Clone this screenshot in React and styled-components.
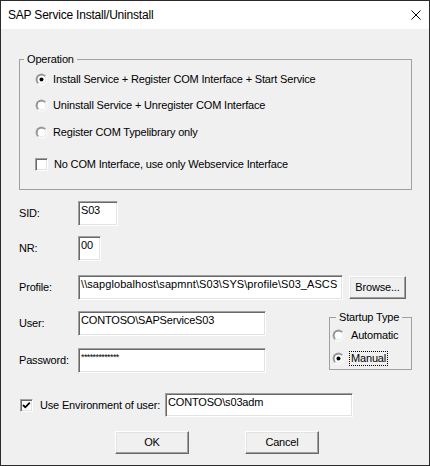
import React, { useId } from "react";
import styled, { createGlobalStyle } from "styled-components";

const Global = createGlobalStyle`
  html, body { margin: 0; padding: 0; background: #ffffff; }
  body { font-family: "Liberation Sans", Arial, sans-serif; }
  #root { width: 430px; height: 466px; }
`;

const Window = styled.div`
  width: 430px;
  height: 466px;
  box-sizing: border-box;
  border: 1px solid #2b2b2b;
  background: #f0f0f0;
  display: flex;
  flex-direction: column;
  font-family: "Liberation Sans", Arial, sans-serif;
  font-size: 11px;
  letter-spacing: -0.17px;
  line-height: 13px;
  color: #000;
`;

const TitleBar = styled.div`
  height: 28px;
  flex: none;
  background: #ffffff;
  display: flex;
  align-items: center;
  justify-content: space-between;
  padding-left: 7px;
`;

const Title = styled.span`
  font-size: 12px;
  letter-spacing: -0.2px;
  line-height: 16px;
`;

const CloseButton = styled.div`
  width: 26px;
  height: 28px;
  display: flex;
  align-items: center;
  justify-content: center;
`;

const Body = styled.div`
  flex: 1;
  display: flex;
  flex-direction: column;
  padding: 24px 17px 0 18px;
`;

const GroupBox = styled.fieldset`
  margin: 0;
  margin-left: ${(p) => (p.$pushRight ? "auto" : "0")};
  padding: 0;
  border: 1px solid #a0a0a0;
  min-width: 0;
  box-sizing: border-box;
  width: ${(p) => (p.$width ? `${p.$width}px` : "auto")};
  flex: none;
`;

const Legend = styled.legend`
  margin-left: ${(p) => p.$offset}px;
  padding: 0 3px;
  line-height: 13px;
  height: 13px;
`;

const GroupInner = styled.div`
  display: flex;
  flex-direction: column;
  padding: 0 0 ${(p) => p.$padBottom}px ${(p) => p.$padLeft}px;
`;

const Option = styled.div`
  display: flex;
  align-items: center;
  height: ${(p) => p.$h}px;
  margin-top: ${(p) => p.$mt || 0}px;
  gap: ${(p) => p.$gap}px;
  white-space: nowrap;
`;

const FocusText = styled.span`
  outline: 1px dotted #000;
  outline-offset: 0;
  padding: 0 1px;
  margin-left: -1px;
`;

const RadioSvg = styled.svg`
  flex: none;
  display: block;
`;

function Radio({ checked }) {
  const id = useId().replace(/:/g, "");
  return (
    <RadioSvg width="13" height="13" viewBox="0 0 13 13">
      <defs>
        <linearGradient id={`o${id}`} x1="0" y1="0" x2="1" y2="1">
          <stop offset="0" stopColor="#a0a0a0" />
          <stop offset="0.5" stopColor="#b4b4b4" />
          <stop offset="0.55" stopColor="#ffffff" />
          <stop offset="1" stopColor="#ffffff" />
        </linearGradient>
        <linearGradient id={`i${id}`} x1="0" y1="0" x2="1" y2="1">
          <stop offset="0" stopColor="#696969" />
          <stop offset="0.5" stopColor="#8a8a8a" />
          <stop offset="0.55" stopColor="#e3e3e3" />
          <stop offset="1" stopColor="#e3e3e3" />
        </linearGradient>
      </defs>
      <circle cx="6.5" cy="6.5" r="6" fill={`url(#o${id})`} />
      <circle cx="6.5" cy="6.5" r="5" fill={`url(#i${id})`} />
      <circle cx="6.5" cy="6.5" r="4" fill="#ffffff" />
      {checked && <circle cx="6.5" cy="6.5" r="2" fill="#000" />}
    </RadioSvg>
  );
}

const CheckBoxBox = styled.span`
  flex: none;
  width: 13px;
  height: 13px;
  box-sizing: border-box;
  background: #fff;
  border: 1px solid;
  border-color: #a0a0a0 #ffffff #ffffff #a0a0a0;
  box-shadow: inset 1px 1px #696969, inset -1px -1px #e3e3e3;
  display: flex;
  align-items: center;
  justify-content: center;
  margin-left: ${(p) => p.$ml || 0}px;
`;

function CheckBox({ checked, ml }) {
  return (
    <CheckBoxBox $ml={ml}>
      {checked && (
        <svg width="11" height="11" viewBox="0 0 11 11">
          <polyline points="2,5 4.3,7.3 8.8,2.6" fill="none" stroke="#000" strokeWidth="1.8" />
        </svg>
      )}
    </CheckBoxBox>
  );
}

const Row = styled.div`
  display: flex;
  align-items: center;
  margin-top: ${(p) => p.$mt}px;
`;

const Label = styled.span`
  width: ${(p) => p.$w}px;
  flex: none;
  white-space: nowrap;
`;

const Field = styled.div`
  width: ${(p) => p.$w}px;
  height: ${(p) => p.$h || 25}px;
  box-sizing: border-box;
  flex: none;
  background: #fff;
  border: 1px solid;
  border-color: #a0a0a0 #ffffff #ffffff #a0a0a0;
  box-shadow: inset 1px 1px #696969, inset -1px -1px #e3e3e3;
  padding: 2px 2px 0 2px;
  white-space: nowrap;
  overflow: hidden;
  letter-spacing: ${(p) => (p.$spacing !== undefined ? `${p.$spacing}px` : "inherit")};
`;

const Mask = styled.span`
  font-size: 9px;
  letter-spacing: -0.6px;
  position: relative;
  top: -1px;
`;

const Split = styled.div`
  display: flex;
  align-items: flex-start;
  margin-top: ${(p) => p.$mt}px;
`;

const Column = styled.div`
  display: flex;
  flex-direction: column;
`;

const EnvLabel = styled.div`
  width: 146px;
  flex: none;
  display: flex;
  align-items: center;
  gap: 7px;
  white-space: nowrap;
`;

const ButtonRow = styled.div`
  display: flex;
  gap: 56px;
  padding-left: 96px;
  margin-top: 14px;
`;

const Button = styled.div`
  width: ${(p) => p.$w}px;
  height: ${(p) => p.$h}px;
  margin-left: ${(p) => p.$ml || 0}px;
  box-sizing: border-box;
  flex: none;
  background: #f0f0f0;
  border: 1px solid;
  border-color: #ffffff #696969 #696969 #ffffff;
  box-shadow: inset -1px -1px #a0a0a0, inset 1px 1px #e3e3e3;
  display: flex;
  align-items: center;
  justify-content: center;
  white-space: nowrap;
`;

export default function App() {
  return (
    <>
      <Global />
      <Window>
        <TitleBar>
          <Title>SAP Service Install/Uninstall</Title>
          <CloseButton>
            <svg width="10" height="10" viewBox="0 0 10 10">
              <path d="M0.5 0.5 L9.5 9.5 M9.5 0.5 L0.5 9.5" stroke="#000" strokeWidth="1" fill="none" />
            </svg>
          </CloseButton>
        </TitleBar>
        <Body>
          <GroupBox>
            <Legend $offset={4}>Operation</Legend>
            <GroupInner $padLeft={15} $padBottom={12}>
              <Option $h={26} $gap={5}>
                <Radio checked />
                <span>Install Service + Register COM Interface + Start Service</span>
              </Option>
              <Option $h={27} $gap={5}>
                <Radio />
                <span>Uninstall Service + Unregister COM Interface</span>
              </Option>
              <Option $h={26} $gap={5}>
                <Radio />
                <span>Register COM Typelibrary only</span>
              </Option>
              <Option $h={26} $mt={6} $gap={6}>
                <CheckBox />
                <span>No COM Interface, use only Webservice Interface</span>
              </Option>
            </GroupInner>
          </GroupBox>

          <Row $mt={11}>
            <Label $w={59}>SID:</Label>
            <Field $w={40}>S03</Field>
          </Row>
          <Row $mt={10}>
            <Label $w={59}>NR:</Label>
            <Field $w={23}>00</Field>
          </Row>
          <Row $mt={14}>
            <Label $w={59}>Profile:</Label>
            <Field $w={265} $spacing={0.08}>\\sapglobalhost\sapmnt\S03\SYS\profile\S03_ASCS</Field>
            <Button $w={57} $h={23} $ml={6}>Browse...</Button>
          </Row>

          <Split $mt={11}>
            <Column>
              <Row $mt={0}>
                <Label $w={59}>User:</Label>
                <Field $w={188}>CONTOSO\SAPServiceS03</Field>
              </Row>
              <Row $mt={12}>
                <Label $w={59}>Password:</Label>
                <Field $w={188}>
                  <Mask>*************</Mask>
                </Field>
              </Row>
            </Column>
            <GroupBox $width={83} $pushRight>
              <Legend $offset={6}>Startup Type</Legend>
              <GroupInner $padLeft={2} $padBottom={0}>
                <Option $h={22} $gap={6}>
                  <Radio />
                  <span>Automatic</span>
                </Option>
                <Option $h={22} $mt={1} $gap={6}>
                  <Radio checked />
                  <FocusText>Manual</FocusText>
                </Option>
              </GroupInner>
            </GroupBox>
          </Split>

          <Row $mt={20}>
            <EnvLabel>
              <CheckBox checked ml={1} />
              <span>Use Environment of user:</span>
            </EnvLabel>
            <Field $w={188} $h={24}>CONTOSO\s03adm</Field>
          </Row>

          <ButtonRow>
            <Button $w={74} $h={23}>OK</Button>
            <Button $w={74} $h={23}>Cancel</Button>
          </ButtonRow>
        </Body>
      </Window>
    </>
  );
}
